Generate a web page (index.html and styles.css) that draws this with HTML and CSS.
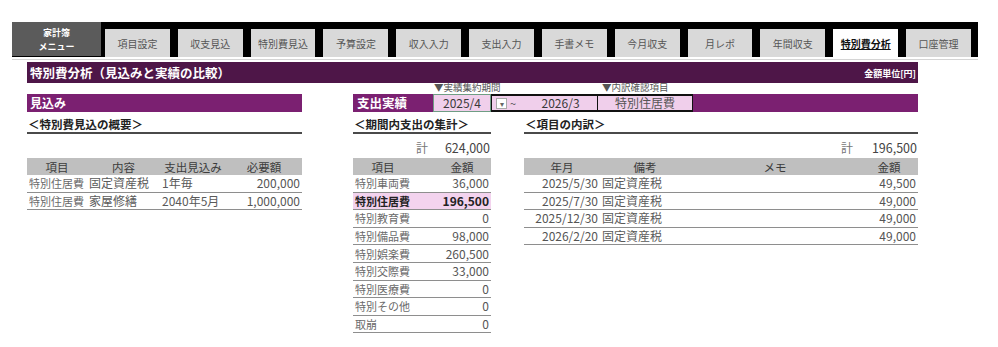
FILE: index.html
```html
<!DOCTYPE html>
<html lang="ja">
<head>
<meta charset="utf-8">
<title>特別費分析</title>
<link rel="stylesheet" href="styles.css">
</head>
<body>
<nav class="nav">
  <div class="menu"><span>家計簿</span><span>メニュー</span></div>
  <div class="tabs">
    <div class="tab">項目設定</div>
    <div class="tab">収支見込</div>
    <div class="tab">特別費見込</div>
    <div class="tab">予算設定</div>
    <div class="tab">収入入力</div>
    <div class="tab">支出入力</div>
    <div class="tab">手書メモ</div>
    <div class="tab">今月収支</div>
    <div class="tab">月レポ</div>
    <div class="tab">年間収支</div>
    <div class="tab active">特別費分析</div>
    <div class="tab">口座管理</div>
  </div>
</nav>
<div class="rule"></div>
<header class="titlebar">
  <h1>特別費分析（見込みと実績の比較）</h1>
  <span class="unit">金額単位[円]</span>
</header>
<main class="sheet">
  <div class="labels">
    <span class="lbl lbl-period">▼実績集約期間</span>
    <span class="lbl">▼内訳確認項目</span>
  </div>
  <div class="bar bar-plan">見込み</div>
  <div class="bar bar-actual">
    <span class="bar-title">支出実績</span>
    <span class="cell cell-from">2025/4</span>
    <span class="cell cell-to"><span class="dd">▾</span><span class="tilde">~</span><span class="to-val">2026/3</span></span>
    <span class="cell cell-item">特別住居費</span>
  </div>

  <section class="panel panel-plan">
    <div class="sub">＜特別費見込の概要＞</div>
    <div class="sum"></div>
    <div class="tbl tbl-plan">
      <div class="tr th"><span class="c">項目</span><span class="c">内容</span><span class="c">支出見込み</span><span class="c">必要額</span></div>
      <div class="tr"><span class="lab">特別住居費</span><span class="txt">固定資産税</span><span class="txt">1年毎</span><span class="num">200,000</span></div>
      <div class="tr"><span class="lab">特別住居費</span><span class="txt">家屋修繕</span><span class="txt">2040年5月</span><span class="num">1,000,000</span></div>
    </div>
  </section>

  <section class="panel panel-mid">
    <div class="sub">＜期間内支出の集計＞</div>
    <div class="sum"><span class="k">計</span><span class="v">624,000</span></div>
    <div class="tbl tbl-mid">
      <div class="tr th"><span class="c c-item">項目</span><span class="c">金額</span></div>
      <div class="tr"><span class="lab">特別車両費</span><span class="num">36,000</span></div>
      <div class="tr hl"><span class="lab">特別住居費</span><span class="num">196,500</span></div>
      <div class="tr"><span class="lab">特別教育費</span><span class="num">0</span></div>
      <div class="tr"><span class="lab">特別備品費</span><span class="num">98,000</span></div>
      <div class="tr"><span class="lab">特別娯楽費</span><span class="num">260,500</span></div>
      <div class="tr"><span class="lab">特別交際費</span><span class="num">33,000</span></div>
      <div class="tr"><span class="lab">特別医療費</span><span class="num">0</span></div>
      <div class="tr"><span class="lab">特別その他</span><span class="num">0</span></div>
      <div class="tr"><span class="lab">取崩</span><span class="num">0</span></div>
    </div>
  </section>

  <section class="panel panel-detail">
    <div class="sub">＜項目の内訳＞</div>
    <div class="sum sum-detail"><span class="k">計</span><span class="v">196,500</span></div>
    <div class="tbl tbl-detail">
      <div class="tr th"><span class="c">年月</span><span class="c">備考</span><span class="c">メモ</span><span class="c">金額</span></div>
      <div class="tr"><span class="date">2025/5/30</span><span class="txt">固定資産税</span><span></span><span class="num">49,500</span></div>
      <div class="tr"><span class="date">2025/7/30</span><span class="txt">固定資産税</span><span></span><span class="num">49,000</span></div>
      <div class="tr"><span class="date">2025/12/30</span><span class="txt">固定資産税</span><span></span><span class="num">49,000</span></div>
      <div class="tr"><span class="date">2026/2/20</span><span class="txt">固定資産税</span><span></span><span class="num">49,000</span></div>
    </div>
  </section>
</main>
</body>
</html>
```

FILE: styles.css
```css
* { box-sizing: border-box; margin: 0; padding: 0; }

body {
  width: 998px;
  height: 347px;
  overflow: hidden;
  background: #fff;
  font-family: "Noto Sans CJK JP", "Noto Sans", sans-serif;
  color: #5a5a5a;
}

/* ---------- navigation ---------- */
.nav {
  display: flex;
  margin: 22px 0 0 12px;
  width: 966px;
  height: 35px;
  background: #000;
}
.menu {
  width: 89px;
  height: 34px;
  background: #5b5b5b;
  color: #fff;
  font-size: 9px;
  font-weight: bold;
  line-height: 11px;
  display: flex;
  flex-direction: column;
  align-items: center;
  justify-content: center;
  gap: 3px;
}
.tabs {
  flex: 1;
  display: flex;
  gap: 8px;
  padding: 7px 7px 0 4px;
}
.tab {
  flex: 1;
  background: #d9d9d9;
  color: #555;
  font-size: 10px;
  display: flex;
  align-items: center;
  justify-content: center;
}
.tab.active {
  background: #fff;
  color: #111;
  font-weight: bold;
  text-decoration: underline;
}
.rule {
  margin: 2px 0 0 12px;
  width: 966px;
  height: 1px;
  background: #d4d4d4;
}

/* ---------- title ---------- */
.titlebar {
  margin: 2px 0 0 27px;
  width: 891px;
  height: 21px;
  background: #4e1648;
  color: #fff;
  display: flex;
  justify-content: space-between;
  align-items: center;
  padding: 0 2px 0 3px;
}
.titlebar h1 {
  font-size: 12.5px;
  font-weight: bold;
  line-height: 16px;
}
.unit {
  font-size: 9px;
  font-weight: bold;
  line-height: 10px;
  align-self: flex-end;
  padding-bottom: 4px;
}

/* ---------- sheet grid ---------- */
.sheet {
  margin-left: 27px;
  width: 891px;
  display: grid;
  grid-template-columns: 275px 51px 138px 33px 394px;
  grid-template-rows: 11px 18px auto;
}
.labels {
  grid-column: 3 / 6;
  grid-row: 1;
  display: flex;
  align-items: flex-start;
  padding-left: 81px;
  font-size: 9.5px;
  line-height: 8px;
  color: #555;
}
.lbl-period { width: 168px; }

.bar {
  grid-row: 2;
  background: #7b2071;
  color: #fff;
  font-weight: bold;
}
.bar-plan {
  grid-column: 1;
  font-size: 12px;
  line-height: 18px;
  padding-left: 3px;
}
.bar-actual {
  grid-column: 3 / 6;
  display: flex;
  align-items: stretch;
}
.bar-title {
  width: 80px;
  font-size: 12.5px;
  line-height: 18px;
  padding-left: 4px;
}
.cell {
  background: #f0cfeb;
  color: #3a3a3a;
  font-weight: normal;
  font-size: 12px;
  line-height: 14px;
  display: flex;
  align-items: center;
  justify-content: center;
}
.cell-from {
  width: 58px;
  border: 1px solid #6f9d84;
}
.cell-to {
  width: 107px;
  border: 1px solid #111;
  border-top-width: 2px;
  border-bottom-width: 2px;
  justify-content: flex-start;
}
.dd {
  width: 11px;
  height: 11px;
  margin-left: 4px;
  background: #fff;
  border: 1px solid #aaa;
  color: #666;
  font-size: 8px;
  line-height: 9px;
  text-align: center;
}
.tilde {
  margin-left: 3px;
  font-size: 11px;
  color: #555;
}
.to-val {
  flex: 1;
  text-align: center;
  padding-left: 8px;
}
.cell-item {
  width: 95px;
  border: 1px solid #111;
  border-left: 0;
  border-top-width: 2px;
  border-bottom-width: 2px;
  color: #555;
}

/* ---------- panels ---------- */
.panel {
  grid-row: 3;
  display: flex;
  flex-direction: column;
}
.panel-plan { grid-column: 1; }
.panel-mid { grid-column: 3; }
.panel-detail { grid-column: 5; }

.sub {
  height: 22px;
  border-bottom: 2px solid #4a4a4a;
  padding: 5px 0 0 1px;
  font-size: 11.5px;
  font-weight: bold;
  line-height: 15px;
  color: #222;
}
.sum {
  height: 24px;
  display: flex;
  justify-content: flex-end;
  align-items: flex-end;
  padding: 0 1px 2px 0;
  line-height: 16px;
  color: #444;
}
.sum .k {
  font-size: 12px;
  color: #777;
  margin-right: 17px;
}
.sum .v { font-size: 12.5px; }
.sum-detail .k { margin-right: 19px; }

/* ---------- tables ---------- */
.tr {
  display: grid;
  height: 17.6px;
  border-bottom: 1px solid #8e8e8e;
  align-items: center;
  line-height: 16px;
  white-space: nowrap;
}
.tr.th {
  height: 17px;
  background: #bfbfbf;
  border-bottom: 0;
  color: #3c3c3c;
  font-size: 11.5px;
}
.tbl-plan .tr { grid-template-columns: 60px 73px 66px 76px; }
.tbl-mid .tr { grid-template-columns: 80px 58px; }
.tbl-detail .tr { grid-template-columns: 76px 90px 170px 58px; }

.c { text-align: center; }
.c-item { padding-right: 20px; }

.lab {
  font-size: 11px;
  color: #6a6a6a;
  padding-left: 2px;
}
.txt {
  font-size: 12px;
  color: #5a5a5a;
  padding-left: 2px;
}
.num {
  font-size: 12px;
  color: #555;
  text-align: right;
  padding-right: 2px;
}
.date {
  font-size: 12px;
  color: #555;
  text-align: right;
  padding-right: 2px;
}
.tr.hl { background: #f3d3ee; }
.tr.hl .lab,
.tr.hl .num {
  font-weight: bold;
  color: #222;
}
```
